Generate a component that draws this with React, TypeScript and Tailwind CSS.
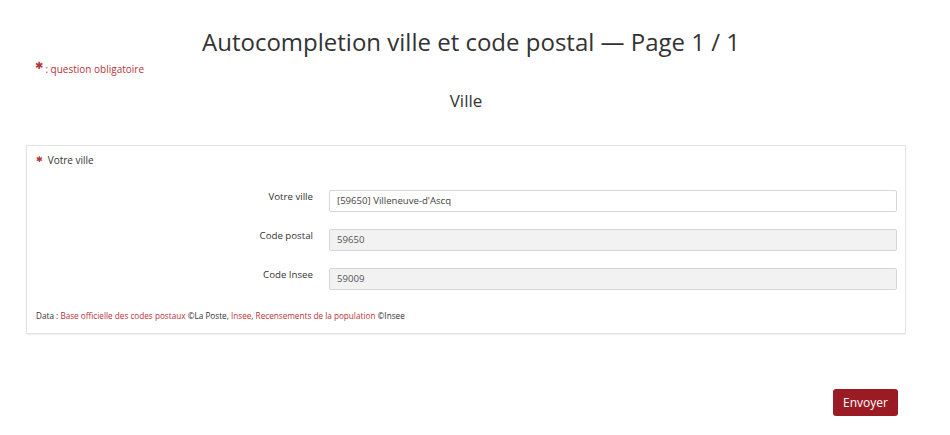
const RED = 'text-[#b7333a]';

function Star({ className = '' }: { className?: string }) {
  return (
    <span className={`${RED} ${className}`} style={{ fontFamily: '"DejaVu Sans", sans-serif' }}>
      ✱
    </span>
  );
}

function Field({ label, value, readOnly }: { label: string; value: string; readOnly?: boolean }) {
  return (
    <div className="flex items-start">
      <label className="w-[293px] shrink-0 pr-[16px] text-right text-[9.7px] leading-[14px] text-[#333]">{label}</label>
      <div
        className={`flex h-[22px] flex-1 items-center rounded-[2px] border border-[#d6d6d6] px-[7px] text-[9.6px] ${
          readOnly ? 'bg-[#f2f2f2] text-[#555]' : 'bg-white text-[#444]'
        }`}
      >
        {value}
      </div>
    </div>
  );
}

export default function App() {
  return (
    <div className="min-h-[435px] w-[950px] bg-white text-[#333]" style={{ fontFamily: '"Open Sans", sans-serif' }}>
      <div className="ml-[26px] w-[880px]">
        <h1 className="pl-[10px] pt-[25px] text-center text-[24px] leading-[34px] text-[#333]">
          Autocompletion ville et code postal — Page 1 / 1
        </h1>
        <div className="mt-[3px] flex items-start pl-[9px] text-[10px] leading-[14px]">
          <Star className="-mt-[3px] text-[10px]" />
          <span className={`${RED} ml-[2px]`}>: question obligatoire</span>
        </div>
        <h2 className="mt-[14px] text-center text-[17px] leading-[22px]">Ville</h2>

        <div className="mt-[33px] border border-[#e3e3e3] pb-[10px] pl-[9px] pr-[8px] pt-[6px] shadow-[0_1px_1px_rgba(0,0,0,0.05)]">
          <div className="flex items-center gap-[5px] text-[10px] leading-[16px]">
            <Star className="text-[8px]" />
            <span>Votre ville</span>
          </div>
          <div className="mt-[22px] flex flex-col gap-[17px]">
            <Field label="Votre ville" value="[59650] Villeneuve-d'Ascq" />
            <Field label="Code postal" value="59650" readOnly />
            <Field label="Code Insee" value="59009" readOnly />
          </div>
          <p className="mt-[19px] text-[8.2px] leading-[14px]">
            Data : <span className={RED}>Base officielle des codes postaux</span> ©La Poste,{' '}
            <span className={RED}>Insee</span>, <span className={RED}>Recensements de la population</span> ©Insee
          </p>
        </div>

        <div className="mt-[55px] flex justify-end pr-[8px]">
          <button className="h-[27px] rounded-[3px] bg-[#9b1b25] px-[10px] text-[12px] text-white">Envoyer</button>
        </div>
      </div>
    </div>
  );
}
